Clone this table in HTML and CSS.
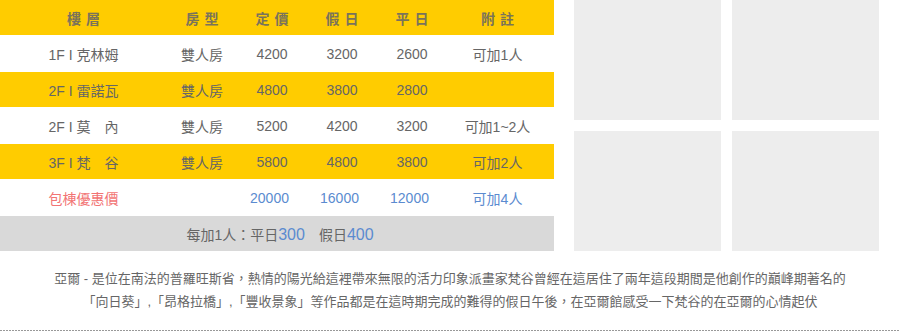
FILE: index.html
```html
<!DOCTYPE html>
<html lang="zh-Hant">
<head>
<meta charset="utf-8">
<link rel="stylesheet" href="styles.css">
</head>
<body>
<div class="page">
  <div class="top">
    <table class="rates">
      <colgroup>
        <col class="c1"><col class="c2"><col class="c3"><col class="c4"><col class="c5"><col class="c6">
      </colgroup>
      <thead>
        <tr class="head">
          <th>樓層</th><th>房型</th><th>定價</th><th>假日</th><th>平日</th><th class="note">附註</th>
        </tr>
      </thead>
      <tbody>
        <tr class="odd"><td>1F I 克林姆</td><td>雙人房</td><td>4200</td><td>3200</td><td>2600</td><td class="note">可加1人</td></tr>
        <tr class="even"><td>2F I 雷諾瓦</td><td>雙人房</td><td>4800</td><td>3800</td><td>2800</td><td class="note"></td></tr>
        <tr class="odd"><td>2F I 莫　內</td><td>雙人房</td><td>5200</td><td>4200</td><td>3200</td><td class="note">可加1~2人</td></tr>
        <tr class="even"><td>3F I 梵　谷</td><td>雙人房</td><td>5800</td><td>4800</td><td>3800</td><td class="note">可加2人</td></tr>
        <tr class="odd whole"><td class="pink">包棟優惠價</td><td></td><td class="blue shift">20000</td><td class="blue shift">16000</td><td class="blue shift">12000</td><td class="note blue">可加4人</td></tr>
        <tr class="extra"><td colspan="6">每加1人：平日<span class="big">300</span>　假日<span class="big">400</span></td></tr>
      </tbody>
    </table>
    <div class="photos">
      <div class="photo"></div>
      <div class="photo"></div>
      <div class="photo"></div>
      <div class="photo"></div>
    </div>
  </div>
  <p class="desc">亞爾 - 是位在南法的普羅旺斯省，熱情的陽光給這裡帶來無限的活力印象派畫家梵谷曾經在這居住了兩年這段期間是他創作的巔峰期著名的<br>「向日葵」,「昂格拉橋」,「豐收景象」等作品都是在這時期完成的難得的假日午後，在亞爾館感受一下梵谷的在亞爾的心情起伏</p>
  <div class="rule"></div>
</div>
</body>
</html>
```

FILE: styles.css
```css
html, body {
  margin: 0;
  padding: 0;
  background: #fff;
}
body {
  font-family: "Liberation Sans", "Noto Sans CJK TC", sans-serif;
  color: #666;
  font-size: 14px;
}
.page {
  width: 900px;
}
.top {
  display: flex;
  align-items: flex-start;
}
.rates {
  width: 554px;
  border-collapse: collapse;
  table-layout: fixed;
}
.c1 { width: 167px; }
.c2 { width: 70px; }
.c3 { width: 70px; }
.c4 { width: 70px; }
.c5 { width: 70px; }
.c6 { width: 107px; }
.rates th, .rates td {
  padding: 0;
  text-align: center;
  vertical-align: middle;
  white-space: nowrap;
}
.rates .note {
  padding-right: 6px;
}
.rates .shift {
  padding-right: 5px;
}
.head {
  height: 35px;
  background: #ffcc00;
}
.head th {
  font-weight: bold;
  color: #7a735a;
  letter-spacing: 5px;
  text-indent: 5px;
}
.odd {
  height: 37px;
  background: #fff;
}
.even {
  height: 35px;
  background: #ffcc00;
}
.extra {
  height: 35px;
  background: #d9d9d9;
}
.extra td {
  padding-left: 6px;
}
.pink {
  color: #f27474;
}
.blue {
  color: #5b8bd0;
}
.big {
  color: #5b8bd0;
  font-size: 16px;
}
.photos {
  margin-left: 20px;
  display: grid;
  grid-template-columns: 147px 147px;
  grid-template-rows: 120px 120px;
  gap: 11px;
}
.photo {
  background: #ededed;
}
.desc {
  margin: 16px 0 0;
  font-size: 13px;
  line-height: 23px;
  text-align: center;
  color: #666;
}
.rule {
  margin-top: 17px;
  height: 1px;
  background: repeating-linear-gradient(to right, #999 0 2px, transparent 2px 3px);
}
```
